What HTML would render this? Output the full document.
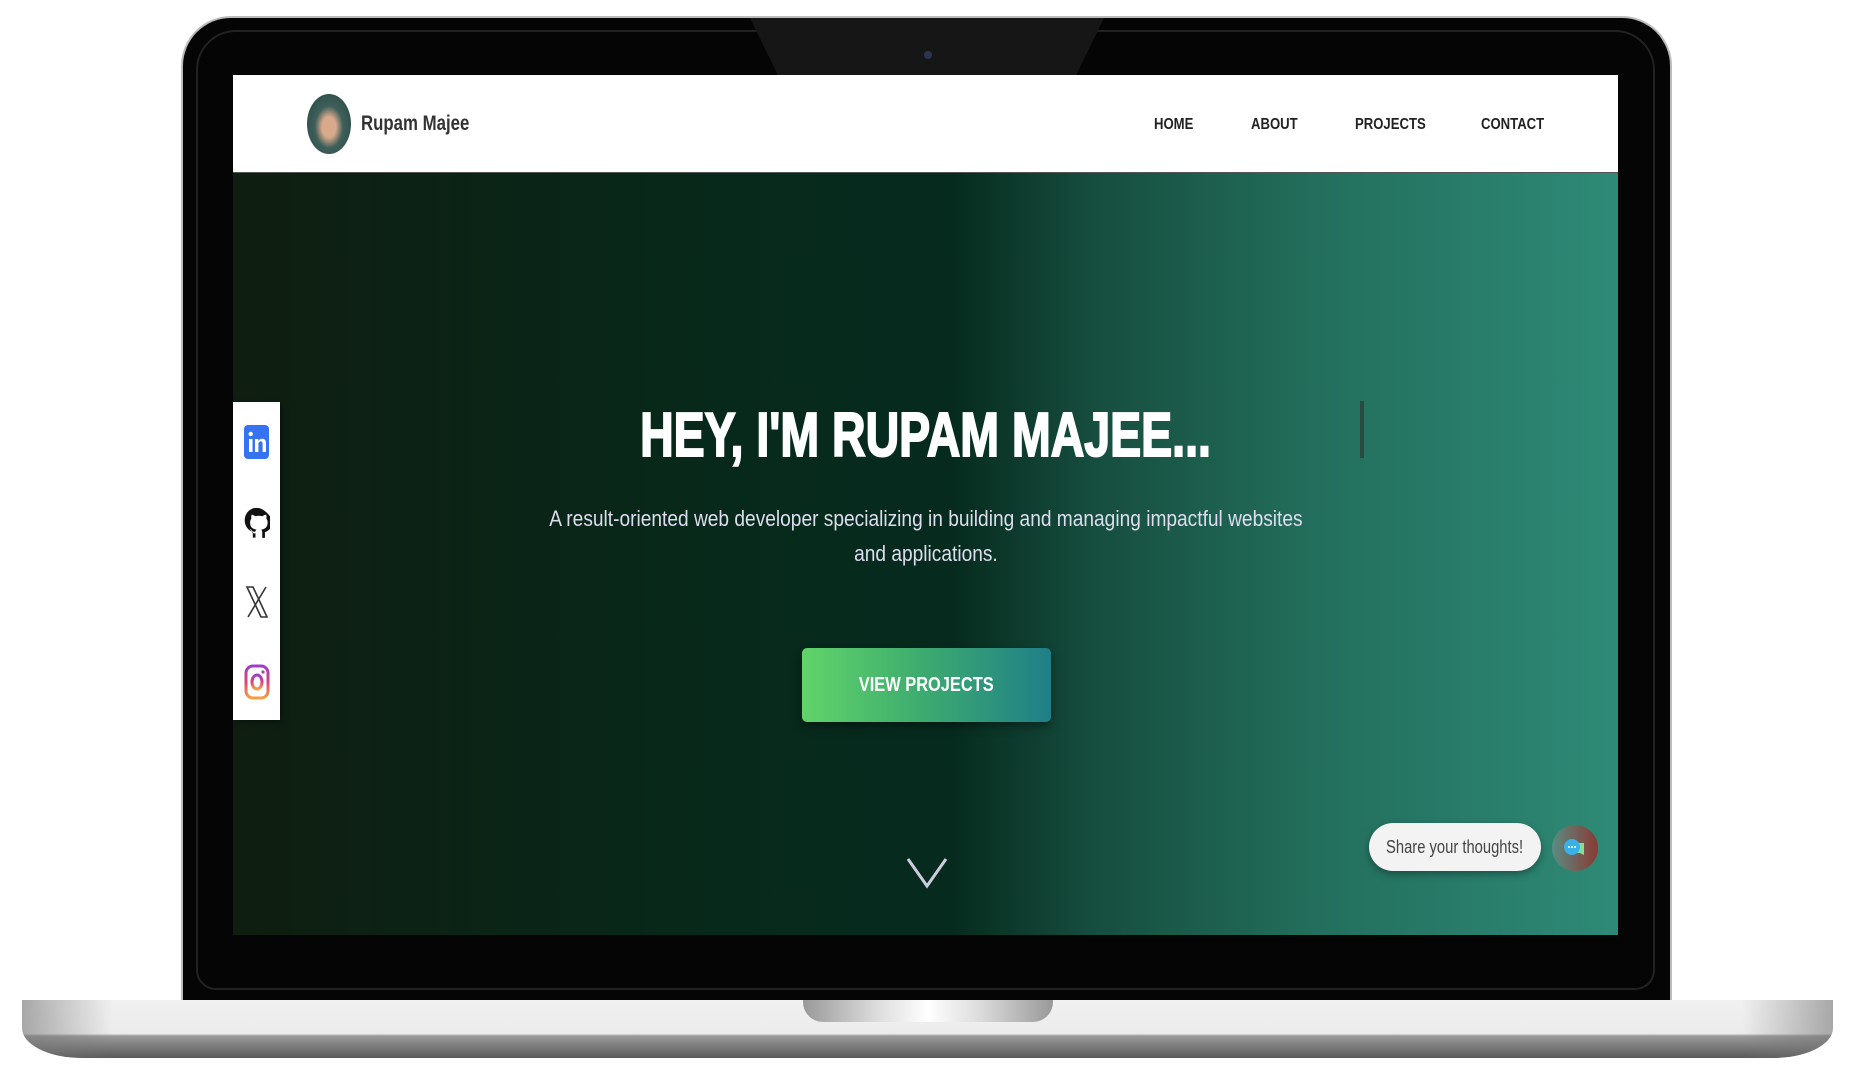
<!DOCTYPE html>
<html><head><meta charset="utf-8"><style>
*{margin:0;padding:0;box-sizing:border-box}
body{width:1851px;height:1080px;background:#fff;position:relative;overflow:hidden;font-family:"Liberation Sans",sans-serif}
.lid{position:absolute;left:183px;top:18px;width:1487px;height:984px;background:#050505;border-radius:48px 48px 0 0;box-shadow:0 0 0 2px #bbb}
.lidin{position:absolute;left:196px;top:30px;width:1459px;height:960px;border:2px solid #222;border-radius:40px 40px 20px 20px}
.trap{position:absolute;left:750px;top:18px;width:354px;height:58px;background:#161616;clip-path:polygon(0 0,100% 0,92% 100%,8% 100%)}
.cam{position:absolute;left:924px;top:51px;width:8px;height:8px;border-radius:50%;background:#2a3550}
.screen{position:absolute;left:233px;top:75px;width:1385px;height:860px;overflow:hidden;background:linear-gradient(90deg,#0f1e11 0%,#07291b 35%,#062b1e 52%,#164d3e 62%,#236e5c 78%,#2e8a76 100%)}
.hdr{position:absolute;left:0;top:0;width:100%;height:98px;background:#fff;border-bottom:1px solid #555}
.av{position:absolute;left:74px;top:19px;width:44px;height:60px;border-radius:50%;background:radial-gradient(ellipse at 50% 55%,#d9a98c 0 22%,#3f5f5a 45%,#24443e 100%)}
.name{position:absolute;left:128px;top:37px;font-size:21px;font-weight:bold;color:#333;transform:scaleX(.8);transform-origin:left}
.nav{position:absolute;top:41px;font-size:16px;font-weight:bold;color:#222;transform:scaleX(.82);transform-origin:left}
h1{position:absolute;left:0;width:1385px;text-align:center;top:325px;font-size:62px;color:#fff;font-weight:bold;transform:scaleX(.75);-webkit-text-stroke:2px #fff}
.cur{position:absolute;left:1127px;top:326px;width:4px;height:57px;background:#2a4a40}
.sub{position:absolute;left:0;width:1385px;text-align:center;top:426px;font-size:22px;line-height:35px;color:#dde;}
.sub span{display:inline-block;transform:scaleX(.87)}
.btn{position:absolute;left:569px;top:573px;width:249px;height:74px;border-radius:5px;background:linear-gradient(90deg,#62d46a,#3fae6e 45%,#1f7f88);box-shadow:0 4px 10px rgba(0,0,0,.4);color:#fff;font-weight:bold;font-size:20px;text-align:center;line-height:74px}
.btn span{display:inline-block;transform:scaleX(.82)}
.side{position:absolute;left:0;top:327px;width:47px;height:318px;background:#fff;box-shadow:2px 2px 6px rgba(0,0,0,.4)}
.pill{position:absolute;left:1136px;top:748px;width:172px;height:48px;border-radius:24px;background:#f3f3f3;box-shadow:0 3px 8px rgba(0,0,0,.35);font-size:18px;color:#444;line-height:48px;text-align:center}
.pill span{display:inline-block;transform:scaleX(.82)}
.bub{position:absolute;left:1319px;top:750px;width:46px;height:46px;border-radius:50%;background:linear-gradient(90deg,#5a8c82,#8a3a33)}
.base{position:absolute;left:22px;top:1000px;width:1811px;height:58px;border-radius:0 0 60px 60px/0 0 30px 30px;background:linear-gradient(180deg,#f0f0f0 0,#ececec 58%,#9a9a9a 62%,#5a5a5a 100%)}
.base:before{content:"";position:absolute;inset:0;border-radius:inherit;background:linear-gradient(90deg,rgba(120,120,120,.6),rgba(255,255,255,0) 5%,rgba(255,255,255,0) 95%,rgba(120,120,120,.6))}
.notch{position:absolute;left:803px;top:1000px;width:250px;height:22px;border-radius:0 0 20px 20px;background:linear-gradient(90deg,#999,#ddd 30%,#fff 50%,#ddd 70%,#999)}
</style></head><body>
<div class="lid"></div><div class="lidin"></div>
<div class="trap"></div><div class="cam"></div>
<div class="screen">
 <div class="hdr">
  <div class="av"></div>
  <div class="name">Rupam Majee</div>
  <div class="nav" style="left:921px">HOME</div>
  <div class="nav" style="left:1018px">ABOUT</div>
  <div class="nav" style="left:1122px">PROJECTS</div>
  <div class="nav" style="left:1248px">CONTACT</div>
 </div>
 <h1>HEY, I'M RUPAM MAJEE...</h1>
 <div class="cur"></div>
 <div class="sub"><span>A result-oriented web developer specializing in building and managing impactful websites<br>and applications.</span></div>
 <div class="btn"><span>VIEW PROJECTS</span></div>
 <svg style="position:absolute;left:672px;top:780px" width="44" height="36" viewBox="0 0 44 36"><path d="M3 4 L22 31 L41 4" fill="none" stroke="#ccd" stroke-width="3"/></svg>
 <div class="side">
  <svg style="position:absolute;left:11px;top:23px" width="25" height="34" viewBox="0 0 25 34"><rect width="25" height="34" rx="4" fill="#3573f0"/><rect x="5" y="14" width="3.5" height="13" fill="#fff"/><circle cx="6.7" cy="9" r="2.2" fill="#fff"/><path d="M11 27V14h3.3v2c1-1.6 2.4-2.3 4-2.3 2.6 0 3.7 1.7 3.7 4.6V27h-3.4v-8.2c0-1.5-.5-2.4-1.8-2.4-1.5 0-2.4 1-2.4 2.8V27z" fill="#fff"/></svg>
  <svg style="position:absolute;left:10px;top:103px" width="27" height="36" viewBox="0 0 16 20"><path d="M8 1C4.1 1 1 4.3 1 8.4c0 3.3 2 6 4.8 7v3.3h1.6v-2.6c-1.5.2-2.4-.6-2.7-1.6-.3-.8-1-1.1-1-1.1.9 0 1.4.9 1.4.9.6 1 1.6 1 2.3.7.1-.5.3-.9.6-1.1-2-.3-3.8-1.2-3.8-4.3 0-.9.3-1.7.8-2.3-.1-.2-.3-1 .1-2.2 0 0 .7-.2 2.3.9a7 7 0 0 1 4 0c1.6-1.1 2.3-.9 2.3-.9.4 1.2.2 2 .1 2.2.5.6.8 1.4.8 2.3 0 3.1-1.8 4-3.8 4.3.3.3.6.8.6 1.6v3.3h1.6v-3.3c2.8-1 4.8-3.7 4.8-7C15 4.3 11.9 1 8 1z" fill="#111"/></svg>
  <svg style="position:absolute;left:12px;top:184px" width="24" height="32" viewBox="0 0 24 32"><path d="M2 1h6l14 30h-6z" fill="none" stroke="#333" stroke-width="1.6"/><path d="M21 1L3 31" stroke="#333" stroke-width="1.6"/></svg>
  <svg style="position:absolute;left:11px;top:262px" width="26" height="36" viewBox="0 0 26 36"><defs><linearGradient id="ig" x1="0" y1="0" x2="0" y2="1"><stop offset="0" stop-color="#9b3fc8"/><stop offset=".5" stop-color="#e0407a"/><stop offset="1" stop-color="#f5a040"/></linearGradient></defs><rect x="2" y="2" width="22" height="32" rx="7" fill="none" stroke="url(#ig)" stroke-width="3"/><ellipse cx="13" cy="18" rx="5" ry="7" fill="none" stroke="url(#ig)" stroke-width="3"/><circle cx="19" cy="8" r="1.6" fill="#b040b0"/></svg>
 </div>
 <div class="pill"><span>Share your thoughts!</span></div>
 <div class="bub"><svg style="position:absolute;left:10px;top:12px" width="26" height="24" viewBox="0 0 26 24"><path d="M10 6h12v12l-4-2H10z" fill="#7fe09a"/><circle cx="10" cy="10" r="8" fill="#3ab0e8"/><circle cx="7" cy="10" r="1" fill="#fff"/><circle cx="10" cy="10" r="1" fill="#fff"/><circle cx="13" cy="10" r="1" fill="#fff"/></svg></div>
</div>
<div class="base"></div>
<div class="notch"></div>
</body></html>
